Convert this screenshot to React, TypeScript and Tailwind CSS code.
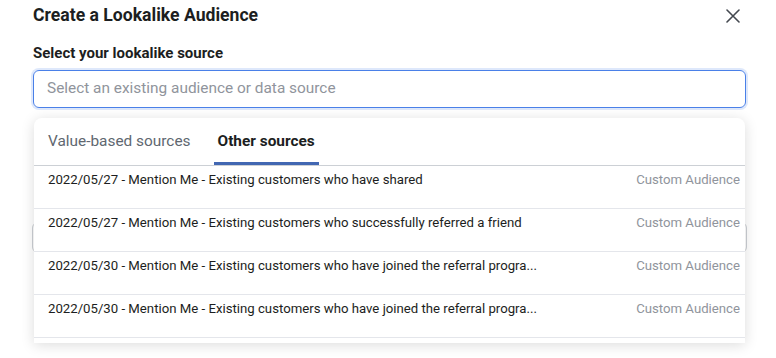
const rows = [
  "2022/05/27 - Mention Me - Existing customers who have shared",
  "2022/05/27 - Mention Me - Existing customers who successfully referred a friend",
  "2022/05/30 - Mention Me - Existing customers who have joined the referral progra...",
  "2022/05/30 - Mention Me - Existing customers who have joined the referral progra...",
];

function CloseIcon() {
  return (
    <svg width="14" height="14" viewBox="0 0 14 14" className="text-[#444950]">
      <path d="M1 1 L13 13 M13 1 L1 13" stroke="currentColor" strokeWidth="1.6" strokeLinecap="round" />
    </svg>
  );
}

export default function App() {
  return (
    <div className="relative h-[358px] w-[776px] overflow-hidden bg-white font-['Roboto','Liberation_Sans',sans-serif]">
      {/* modal body */}
      <div className="px-[33px] pt-[3px]">
        <div className="flex items-center justify-between">
          <h1 className="text-[17.6px] font-bold leading-6 text-[#1c1e21]">Create a Lookalike Audience</h1>
          <button className="mr-[3px] mt-[2px]">
            <CloseIcon />
          </button>
        </div>
        <p className="mt-[18px] text-[15px] font-bold leading-4 text-[#1c1e21]">Select your lookalike source</p>
        <div className="mt-[9px] flex h-[38px] w-[713px] items-center rounded-md border border-[#4a80e8] px-[13px] shadow-[0_0_0_2px_rgba(74,128,232,0.18)]">
          <span className="text-[15.4px] text-[#90949c]">Select an existing audience or data source</span>
        </div>
        {/* content under the dropdown */}
        <div className="mt-[114px] h-[31px] w-[715px] -ml-[1px] rounded-md border border-[#ccd0d5]" />
      </div>

      {/* dropdown */}
      <div className="absolute left-[34px] top-[118px] h-[225px] w-[711px] overflow-hidden rounded-t-lg bg-white shadow-[0_2px_14px_rgba(0,0,0,0.14)]">
        <div className="flex h-[48px] items-end gap-[19px] border-b border-[#ccd0d5] px-[10px]">
          <div className="flex h-full items-center px-1 text-[15.4px] text-[#606770]">Value-based sources</div>
          <div className="flex h-full items-center border-b-[3px] border-[#4267b2] px-1 pt-[3px] text-[15.4px] font-bold text-[#1c1e21]">
            Other sources
          </div>
        </div>
        {rows.map((r, i) => (
          <div key={i} className="flex h-[43px] justify-between border-b border-[#e4e6eb] pl-[14px] pr-[5px] pt-[6px] text-[13.2px] leading-4">
            <span className="text-[#1c1e21]">{r}</span>
            <span className="text-[#90949c]">Custom Audience</span>
          </div>
        ))}
      </div>
    </div>
  );
}
